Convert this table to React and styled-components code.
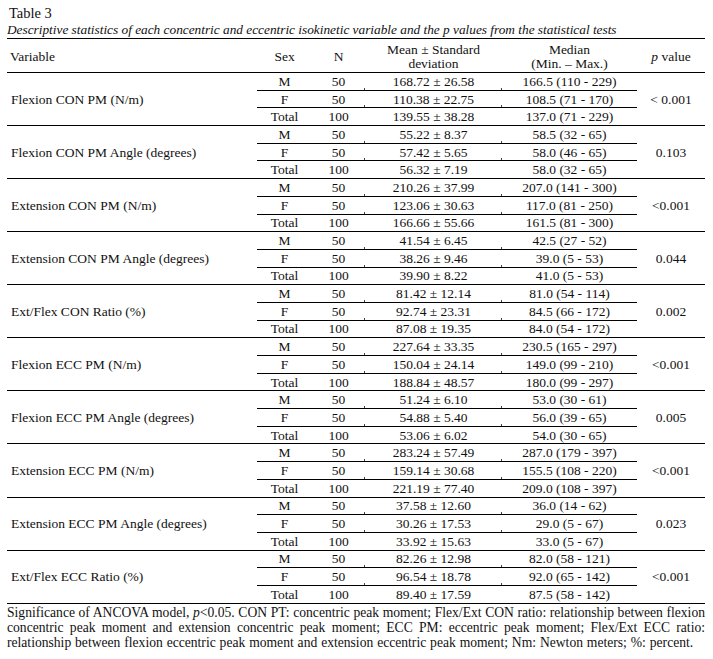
import React from 'react'
import styled, { createGlobalStyle } from 'styled-components'

const GlobalStyle = createGlobalStyle`
  html, body {
    margin: 0;
    padding: 0;
    background: #ffffff;
  }
  body {
    font-family: "Liberation Serif", "Times New Roman", serif;
    color: #111;
  }
`

const rows = [
  {
    name: 'Flexion CON PM (N/m)',
    p: '< 0.001',
    data: [
      ['168.72 ± 26.58', '166.5 (110 - 229)'],
      ['110.38 ± 22.75', '108.5 (71 - 170)'],
      ['139.55 ± 38.28', '137.0 (71 - 229)'],
    ],
  },
  {
    name: 'Flexion CON PM Angle (degrees)',
    p: '0.103',
    data: [
      ['55.22 ± 8.37', '58.5 (32 - 65)'],
      ['57.42 ± 5.65', '58.0 (46 - 65)'],
      ['56.32 ± 7.19', '58.0 (32 - 65)'],
    ],
  },
  {
    name: 'Extension CON PM (N/m)',
    p: '<0.001',
    data: [
      ['210.26 ± 37.99', '207.0 (141 - 300)'],
      ['123.06 ± 30.63', '117.0 (81 - 250)'],
      ['166.66 ± 55.66', '161.5 (81 - 300)'],
    ],
  },
  {
    name: 'Extension CON PM Angle (degrees)',
    p: '0.044',
    data: [
      ['41.54 ± 6.45', '42.5 (27 - 52)'],
      ['38.26 ± 9.46', '39.0 (5 - 53)'],
      ['39.90 ± 8.22', '41.0 (5 - 53)'],
    ],
  },
  {
    name: 'Ext/Flex CON Ratio (%)',
    p: '0.002',
    data: [
      ['81.42 ± 12.14', '81.0 (54 - 114)'],
      ['92.74 ± 23.31', '84.5 (66 - 172)'],
      ['87.08 ± 19.35', '84.0 (54 - 172)'],
    ],
  },
  {
    name: 'Flexion ECC PM (N/m)',
    p: '<0.001',
    data: [
      ['227.64 ± 33.35', '230.5 (165 - 297)'],
      ['150.04 ± 24.14', '149.0 (99 - 210)'],
      ['188.84 ± 48.57', '180.0 (99 - 297)'],
    ],
  },
  {
    name: 'Flexion ECC PM Angle (degrees)',
    p: '0.005',
    data: [
      ['51.24 ± 6.10', '53.0 (30 - 61)'],
      ['54.88 ± 5.40', '56.0 (39 - 65)'],
      ['53.06 ± 6.02', '54.0 (30 - 65)'],
    ],
  },
  {
    name: 'Extension ECC PM (N/m)',
    p: '<0.001',
    data: [
      ['283.24 ± 57.49', '287.0 (179 - 397)'],
      ['159.14 ± 30.68', '155.5 (108 - 220)'],
      ['221.19 ± 77.40', '209.0 (108 - 397)'],
    ],
  },
  {
    name: 'Extension ECC PM Angle (degrees)',
    p: '0.023',
    data: [
      ['37.58 ± 12.60', '36.0 (14 - 62)'],
      ['30.26 ± 17.53', '29.0 (5 - 67)'],
      ['33.92 ± 15.63', '33.0 (5 - 67)'],
    ],
  },
  {
    name: 'Ext/Flex ECC Ratio (%)',
    p: '<0.001',
    data: [
      ['82.26 ± 12.98', '82.0 (58 - 121)'],
      ['96.54 ± 18.78', '92.0 (65 - 142)'],
      ['89.40 ± 17.59', '87.5 (58 - 142)'],
    ],
  },
]

const sexes = [
  ['M', '50'],
  ['F', '50'],
  ['Total', '100'],
]

const Page = styled.div`
  width: 698px;
  padding: 5px 8px 0 7px;
  font-size: 13.5px;
`

const Title = styled.div`
  font-size: 14.5px;
  line-height: 17px;
  padding-left: 2px;
`

const Caption = styled.div`
  font-style: italic;
  font-size: 13.3px;
  line-height: 16px;
`

const Table = styled.table`
  width: 698px;
  border-collapse: collapse;
  table-layout: fixed;
  border-top: 1px solid #000;
  font-size: 13.5px;
`

const Col = styled.col`
  width: ${(p) => p.$w}px;
`

const Th = styled.th`
  font-weight: normal;
  text-align: ${(p) => (p.$left ? 'left' : 'center')};
  padding: 2px 0 0 ${(p) => (p.$left ? '3px' : '0')};
  line-height: 14px;
  height: 31px;
  border-bottom: 1px solid #000;
  vertical-align: middle;
`

const Tr = styled.tr`
  height: 17.7px;
`

const Td = styled.td`
  position: relative;
  padding: 0;
  line-height: 15px;
  text-align: ${(p) => (p.$left ? 'left' : 'center')};
  padding-left: ${(p) => (p.$left ? '4px' : '0')};
  vertical-align: middle;
  border-bottom: ${(p) => (p.$line ? '1px solid #000' : 'none')};
  white-space: nowrap;

  &::after {
    content: '';
    display: ${(p) => (p.$tick ? 'block' : 'none')};
    position: absolute;
    right: 0;
    bottom: 0;
    width: 1px;
    height: 2px;
    background: #444;
  }
`

const Footer = styled.div`
  padding-top: 1px;
  line-height: 15px;
  font-size: 13.6px;
`

const JustLine = styled.div`
  text-align: justify;
  text-align-last: ${(p) => (p.$last ? 'left' : 'justify')};
  word-spacing: ${(p) => (p.$last ? '0.5px' : '0')};
  white-space: nowrap;
`

const Pi = styled.i`
  font-style: italic;
`

export default function App() {
  return (
    <>
      <GlobalStyle />
      <Page>
        <Title>Table 3</Title>
        <Caption>
          Descriptive statistics of each concentric and eccentric isokinetic variable and the p values from the statistical tests
        </Caption>
        <Table>
          <colgroup>
            <Col $w={250} />
            <Col $w={55} />
            <Col $w={53} />
            <Col $w={137} />
            <Col $w={135} />
            <Col $w={68} />
          </colgroup>
          <thead>
            <tr>
              <Th $left>Variable</Th>
              <Th>Sex</Th>
              <Th>N</Th>
              <Th>
                Mean ± Standard
                <br />
                deviation
              </Th>
              <Th>
                Median
                <br />
                (Min. – Max.)
              </Th>
              <Th>
                <Pi>p</Pi> value
              </Th>
            </tr>
          </thead>
          <tbody>
            {rows.map((r) =>
              sexes.map(([sex, n], i) => {
                const sub = i < 2
                return (
                  <Tr key={r.name + sex}>
                    {i === 0 && (
                      <Td $left rowSpan={3} $line>
                        {r.name}
                      </Td>
                    )}
                    <Td $line>{sex}</Td>
                    <Td $line $tick={sub}>{n}</Td>
                    <Td $line $tick={sub}>{r.data[i][0]}</Td>
                    <Td $line>{r.data[i][1]}</Td>
                    {i === 0 && (
                      <Td rowSpan={3} $line>
                        {r.p}
                      </Td>
                    )}
                  </Tr>
                )
              })
            )}
          </tbody>
        </Table>
        <Footer>
          <JustLine>
            Significance of ANCOVA model, <Pi>p</Pi>&lt;0.05. CON PT: concentric peak moment; Flex/Ext CON ratio: relationship between flexion
          </JustLine>
          <JustLine>
            concentric peak moment and extension concentric peak moment; ECC PM: eccentric peak moment; Flex/Ext ECC ratio:
          </JustLine>
          <JustLine $last>
            relationship between flexion eccentric peak moment and extension eccentric peak moment; Nm: Newton meters; %: percent.
          </JustLine>
        </Footer>
      </Page>
    </>
  )
}
